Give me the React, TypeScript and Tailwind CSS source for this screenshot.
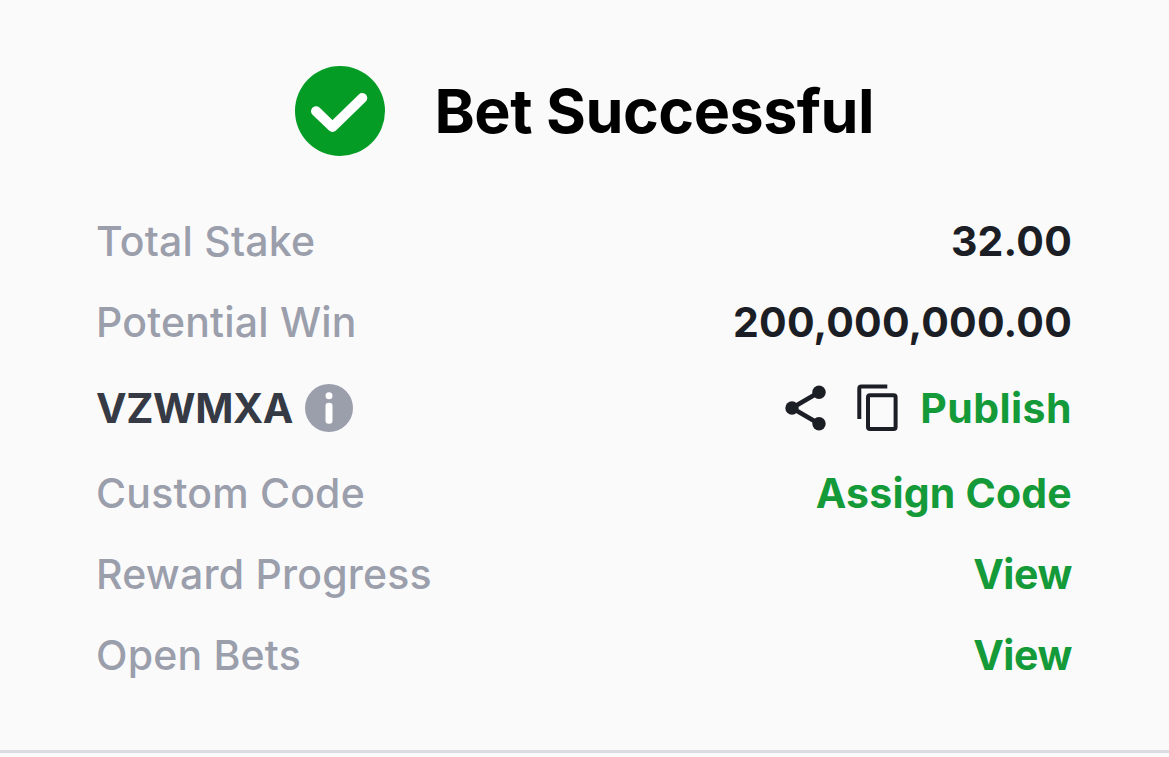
import React from 'react';

interface RowProps {
  label: React.ReactNode;
  children: React.ReactNode;
  className?: string;
}

const Row = ({ label, children, className = '' }: RowProps) => (
  <div className={`flex items-center justify-between ${className}`}>
    <div className="flex items-center text-[#9b9eab]">{label}</div>
    <div className="flex items-center font-bold">{children}</div>
  </div>
);

const App = () => {
  return (
    <div className="h-[757px] w-[1169px] overflow-hidden bg-[#fafafb] font-['Inter',sans-serif]">
      <div className="h-[750px] pt-[66px] pr-[97px] pl-24">
        <div className="flex h-[90px] items-center pl-[199px]">
          <svg viewBox="0 0 90 90" className="h-[90px] w-[90px] shrink-0">
            <circle cx="45" cy="45" r="45" fill="#049c24" />
            <path d="M21 45.2 L37.5 61 L67.3 32" fill="none" stroke="#fff" strokeWidth="10" strokeLinecap="round" strokeLinejoin="round" />
          </svg>
          <h1 className="ml-[49.5px] text-[61px] leading-[90px] font-bold tracking-[-0.5px] whitespace-nowrap text-black">
            Bet Successful
          </h1>
        </div>

        <div className="mt-[45px] text-[41px] leading-[81px] font-medium tracking-[0.2px] whitespace-nowrap">
          <Row label="Total Stake">
            <span className="text-[#1b1e25]">32.00</span>
          </Row>
          <Row label="Potential Win">
            <span className="text-[#1b1e25]">200,000,000.00</span>
          </Row>
          <Row
            className="h-[90px]"
            label={
              <>
                <span className="font-bold tracking-[-0.4px] text-[#353a45]">VZWMXA</span>
                <svg viewBox="0 0 48 48" className="ml-3 h-12 w-12">
                  <circle cx="24" cy="24" r="24" fill="#9b9eab" />
                  <circle cx="24" cy="11.8" r="3.5" fill="#fff" />
                  <rect x="20.5" y="18.8" width="7" height="21" rx="3" fill="#fff" />
                </svg>
              </>
            }
          >
            <svg viewBox="0 0 42 46" className="h-[46px] w-[42px] text-[#1b1e25]">
              <path d="M34 7.3 L7 23 L34 38.7" fill="none" stroke="currentColor" strokeWidth="4.6" />
              <circle cx="34" cy="7.3" r="6.7" fill="currentColor" />
              <circle cx="7" cy="23" r="6.7" fill="currentColor" />
              <circle cx="34" cy="38.7" r="6.7" fill="currentColor" />
            </svg>
            <svg viewBox="0 0 42 48" className="ml-[30px] h-12 w-[42px] text-[#1b1e25]">
              <path d="M2.3 35 V4.6 Q2.3 2.6 4.3 2.6 H30.3" fill="none" stroke="currentColor" strokeWidth="4" />
              <rect x="11" y="11.3" width="27.6" height="33.8" rx="2" fill="none" stroke="currentColor" strokeWidth="4" />
            </svg>
            <span className="ml-[21px] tracking-[0.45px] text-[#149a38]">Publish</span>
          </Row>
          <Row label="Custom Code">
            <span className="text-[#149a38]">Assign Code</span>
          </Row>
          <Row label="Reward Progress">
            <span className="tracking-[-0.4px] text-[#149a38]">View</span>
          </Row>
          <Row label="Open Bets">
            <span className="tracking-[-0.4px] text-[#149a38]">View</span>
          </Row>
        </div>
      </div>
      <div className="h-[3px] bg-[#dcdde4]" />
    </div>
  );
};

export default App;
